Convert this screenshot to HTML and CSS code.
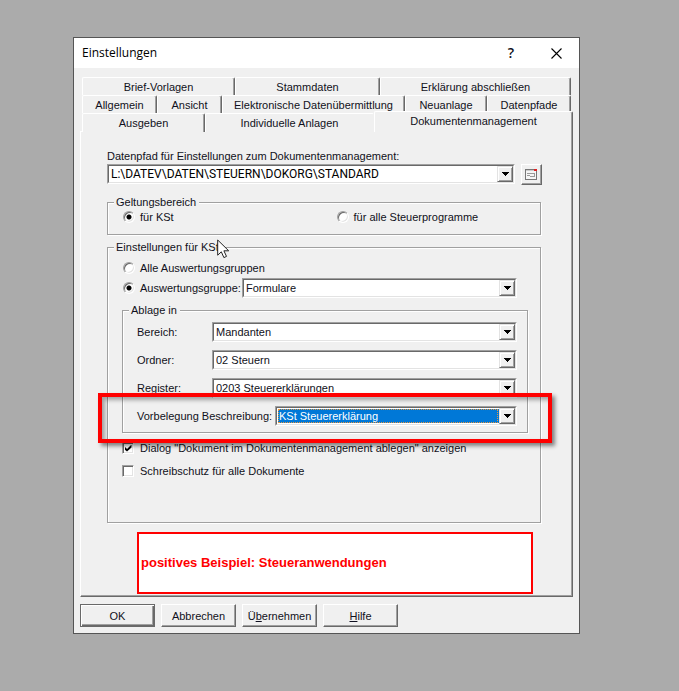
FILE: index.html
```html
<!DOCTYPE html>
<html lang="de">
<head>
<meta charset="utf-8">
<title>Einstellungen</title>
<link rel="stylesheet" href="styles.css">
</head>
<body>
<main class="dialog">
  <header class="titlebar">
    <h1 class="title">Einstellungen</h1>
    <button class="title-btn help" type="button">?</button>
    <button class="title-btn" type="button" aria-label="Schließen">
      <svg width="11" height="11" viewBox="0 0 11 11"><path d="M0.5 0.5l10 10M10.5 0.5l-10 10" stroke="#000" stroke-width="1.1" fill="none"/></svg>
    </button>
  </header>
  <form class="body">
    <nav class="tabs">
      <div class="tab-row row-a">
        <button type="button" class="tab">Brief-Vorlagen</button>
        <button type="button" class="tab">Stammdaten</button>
        <button type="button" class="tab">Erklärung abschließen</button>
      </div>
      <div class="tab-row row-b">
        <button type="button" class="tab">Allgemein</button>
        <button type="button" class="tab">Ansicht</button>
        <button type="button" class="tab">Elektronische Datenübermittlung</button>
        <button type="button" class="tab">Neuanlage</button>
        <button type="button" class="tab">Datenpfade</button>
      </div>
      <div class="tab-row row-c">
        <button type="button" class="tab">Ausgeben</button>
        <button type="button" class="tab last">Individuelle Anlagen</button>
        <button type="button" class="tab active">Dokumentenmanagement</button>
      </div>
    </nav>
    <section class="panel">
      <label class="path-label" for="path">Datenpfad für Einstellungen zum Dokumentenmanagement:</label>
      <div class="path-row">
        <span class="combo path">
          <select id="path"><option>L:\DATEV\DATEN\STEUERN\DOKORG\STANDARD</option></select>
          <span class="arrow"><svg width="7" height="4" viewBox="0 0 7 4" shape-rendering="crispEdges"><path d="M0 0h7v1h-1v1h-1v1h-1v1h-1v-1h-1v-1h-1v-1h-1z"/></svg></span>
        </span>
        <button class="browse" type="button" aria-label="Pfad wählen">
          <svg width="13" height="11" viewBox="0 0 13 11" shape-rendering="crispEdges">
            <path d="M0 0h12v11h-12z" fill="#777"/><path d="M1 2h10v8h-10z" fill="#f5f5f5"/><path d="M1 1h8v1h-8z" fill="#ccc"/>
            <path d="M2 4h8v1h-8zM2 6h3v1h-3zM9 5h1v3h-1zM5 7h5v1h-5z" fill="#999"/><path d="M9 0h3v2h-3z" fill="#d22"/>
          </svg>
        </button>
      </div>

      <fieldset class="group scope">
        <legend>Geltungsbereich</legend>
        <label class="choice"><input type="radio" name="scope" checked>für KSt</label>
        <label class="choice"><input type="radio" name="scope">für alle Steuerprogramme</label>
      </fieldset>

      <fieldset class="group settings">
        <legend>Einstellungen für KSt
          <svg class="cursor" width="13" height="20" viewBox="0 0 13 20"><path d="M0.7 1v15.2l3.6-3.4 2.6 5.8 2.6-1.2-2.6-5.6h4.8z" fill="#fff" stroke="#222" stroke-width="1"/></svg>
        </legend>
        <label class="choice"><input type="radio" name="group">Alle Auswertungsgruppen</label>
        <div class="line group-line">
          <label class="choice"><input type="radio" name="group" checked>Auswertungsgruppe:</label>
          <span class="combo">
            <select aria-label="Auswertungsgruppe"><option>Formulare</option></select>
            <span class="arrow"><svg width="7" height="4" viewBox="0 0 7 4" shape-rendering="crispEdges"><path d="M0 0h7v1h-1v1h-1v1h-1v1h-1v-1h-1v-1h-1v-1h-1z"/></svg></span>
          </span>
        </div>
        <fieldset class="group store">
          <legend>Ablage in</legend>
          <div class="line">
            <label for="area">Bereich:</label>
            <span class="combo">
              <select id="area"><option>Mandanten</option></select>
              <span class="arrow"><svg width="7" height="4" viewBox="0 0 7 4" shape-rendering="crispEdges"><path d="M0 0h7v1h-1v1h-1v1h-1v1h-1v-1h-1v-1h-1v-1h-1z"/></svg></span>
            </span>
          </div>
          <div class="line">
            <label for="folder">Ordner:</label>
            <span class="combo">
              <select id="folder"><option>02 Steuern</option></select>
              <span class="arrow"><svg width="7" height="4" viewBox="0 0 7 4" shape-rendering="crispEdges"><path d="M0 0h7v1h-1v1h-1v1h-1v1h-1v-1h-1v-1h-1v-1h-1z"/></svg></span>
            </span>
          </div>
          <div class="line">
            <label for="register">Register:</label>
            <span class="combo">
              <select id="register"><option>0203 Steuererklärungen</option></select>
              <span class="arrow"><svg width="7" height="4" viewBox="0 0 7 4" shape-rendering="crispEdges"><path d="M0 0h7v1h-1v1h-1v1h-1v1h-1v-1h-1v-1h-1v-1h-1z"/></svg></span>
            </span>
          </div>
          <div class="line wide">
            <label for="preset">Vorbelegung Beschreibung:</label>
            <span class="combo selected">
              <select id="preset"><option>KSt Steuererklärung</option></select>
              <span class="arrow"><svg width="7" height="4" viewBox="0 0 7 4" shape-rendering="crispEdges"><path d="M0 0h7v1h-1v1h-1v1h-1v1h-1v-1h-1v-1h-1v-1h-1z"/></svg></span>
            </span>
          </div>
          <div class="marker"></div>
        </fieldset>
        <label class="choice check"><input type="checkbox" checked>Dialog "Dokument im Dokumentenmanagement ablegen" anzeigen</label>
        <label class="choice check"><input type="checkbox">Schreibschutz für alle Dokumente</label>
      </fieldset>

      <p class="note">positives Beispiel: Steueranwendungen</p>
    </section>
    <footer class="actions">
      <button type="button" class="btn default">OK</button>
      <button type="button" class="btn">Abbrechen</button>
      <button type="button" class="btn"><span>Ü<u>b</u>ernehmen</span></button>
      <button type="button" class="btn"><span><u>H</u>ilfe</span></button>
    </footer>
  </form>
</main>
</body>
</html>
```
FILE: styles.css
```css
:root {
  --face: #f0f0f0;
  --shade: #a0a0a0;
  --dark: #696969;
  --light: #e3e3e3;
}

* {
  box-sizing: border-box;
}

body {
  margin: 0;
  padding: 37px 99px 57px 73px;
  background: #ababab;
}

body,
button,
select {
  font-family: "Liberation Sans", Arial, sans-serif;
  font-size: 11px;
  line-height: 14px;
  color: #101020;
}

button {
  padding: 0;
  border: 0;
  background: var(--face);
}

.dialog {
  border: 1px solid #555;
  background: var(--face);
}

.titlebar {
  display: flex;
  align-items: center;
  height: 30px;
  padding: 0 8px;
  background: #fff;
}

.title {
  flex: 1;
  margin: 0;
  font: 12px/16px "Open Sans", "Noto Sans", sans-serif;
  color: #000;
}

.title-btn {
  display: grid;
  place-items: center;
  width: 30px;
  height: 28px;
  background: none;
}

.title-btn.help {
  margin-right: 15px;
  font: 600 14px/16px "Open Sans", sans-serif;
}

.body {
  padding: 9px 6px 6px;
}

/* Tabs */
.tab-row {
  display: grid;
  height: 18px;
  margin: 0 2px;
}

.row-a {
  grid-template-columns: 153fr 145fr 191fr;
}

.row-b {
  grid-template-columns: 75fr 65fr 183fr 82fr 84fr;
}

.row-c {
  grid-template-columns: 123fr 169fr 199fr;
  margin-right: 0;
}

.tab {
  border: 1px solid #fff;
  border-width: 1px 1px 0;
  border-right-color: var(--dark);
  border-radius: 2px 2px 0 0;
  box-shadow: inset -1px 0 var(--shade);
  white-space: nowrap;
}

.tab.last {
  border-right-color: var(--face);
  box-shadow: none;
}

.tab.active {
  position: relative;
  z-index: 1;
  height: 21px;
  margin-top: -2px;
  padding-bottom: 2px;
}

.panel {
  padding: 17px 31px 2px 26px;
  border: 1px solid #fff;
  border-right-color: var(--dark);
  border-bottom-color: var(--dark);
  box-shadow: inset -1px -1px var(--shade);
}

.path-label {
  display: block;
}

.path-row {
  display: flex;
  gap: 6px;
  margin: 1px -1px 0 0;
}

/* Drop-down lists */
.combo {
  position: relative;
  display: flex;
  flex: 1;
  height: 20px;
  border: 1px solid var(--shade);
  border-right-color: #fff;
  border-bottom-color: #fff;
}

.combo select {
  flex: 1;
  min-width: 0;
  padding: 0 20px 0 2px;
  border: 1px solid var(--dark);
  border-right-color: var(--light);
  border-bottom-color: var(--light);
  border-radius: 0;
  outline: 0;
  appearance: none;
  background: #fff;
}

.arrow {
  position: absolute;
  top: 1px;
  right: 1px;
  bottom: 1px;
  display: grid;
  place-items: center;
  width: 16px;
  border: 1px solid var(--light);
  border-right-color: var(--dark);
  border-bottom-color: var(--dark);
  background: var(--face);
  box-shadow: inset 1px 1px #fff, inset -1px -1px var(--shade);
  pointer-events: none;
}

.combo.selected {
  background: #fff;
}

.combo.selected::before {
  content: "";
  position: absolute;
  inset: 2px 18px 2px 2px;
  border: 1px dotted #e8963c;
  pointer-events: none;
}

.combo.selected select {
  background: #0078d7 padding-box;
  box-shadow: inset 0 0 0 1px #fff;
  color: #fff;
}

.path select {
  font-family: Roboto, sans-serif;
  font-size: 12px;
  color: #000;
}

.browse {
  display: grid;
  place-items: center;
  width: 21px;
  height: 21px;
  border: 1px solid #fff;
  border-right-color: var(--dark);
  border-bottom-color: var(--dark);
  box-shadow: inset -1px -1px var(--shade);
}

/* Groups */
.group {
  min-width: 0;
  margin: 0;
  border: 1px solid var(--shade);
  box-shadow: 1px 1px #fff, inset 1px 1px #fff;
}

.group legend {
  position: relative;
  margin-left: -8px;
  padding: 0 3px 0 2px;
  background: var(--face);
}

.scope {
  display: grid;
  grid-template-columns: 213fr 204fr;
  margin-top: 10px;
  padding: 0 0 9px 14px;
}

.settings {
  margin-top: 5px;
  padding: 6px 12px 43px 14px;
}

.cursor {
  position: absolute;
  top: -1px;
  right: -8px;
}

.choice {
  display: flex;
  align-items: center;
  height: 16px;
  white-space: nowrap;
}

.choice input {
  flex: none;
  width: 12px;
  height: 12px;
  margin: 0 5px 0 1px;
  border: 1px solid var(--shade);
  border-right-color: #fff;
  border-bottom-color: #fff;
  appearance: none;
  background: #fff;
  box-shadow: inset 1px 1px var(--dark), inset -1px -1px var(--light);
}

.choice input[type="radio"] {
  border-radius: 50%;
}

.choice input[type="radio"]:checked {
  background: radial-gradient(circle, #000 2px, #fff 3px);
}

.line {
  display: grid;
  grid-template-columns: 75px 1fr;
  align-items: center;
  white-space: nowrap;
}

.line.wide {
  grid-template-columns: 138px 1fr;
}

.group-line {
  grid-template-columns: 120px 1fr;
  margin: 2px 11px 0 0;
}

.store {
  position: relative;
  display: grid;
  gap: 8px;
  margin-top: 5px;
  padding: 5px 10px 6px 14px;
}

.marker {
  position: absolute;
  right: -25px;
  bottom: -11px;
  left: -25px;
  height: 50px;
  border: 4px solid #f00;
  box-shadow: 3px 3px 4px #0007, inset 3px 3px 4px #0005;
  pointer-events: none;
}

.choice.check {
  margin-top: 7px;
}

.choice.check input {
  display: grid;
  place-items: center;
  margin: 0 6px 0 0;
}

.check input:checked::before {
  content: "";
  width: 7px;
  height: 7px;
  background: #000;
  clip-path: polygon(0 29%, 36% 64%, 100% 0, 100% 43%, 36% 100%, 0 71%);
}

.note {
  display: flex;
  align-items: center;
  height: 62px;
  margin: 9px 8px 0 30px;
  padding: 0 2px;
  border: 2px solid #f00;
  background: #fff;
  font: bold 13px/16px "Liberation Sans", sans-serif;
  color: #f00;
}

/* Bottom buttons */
.actions {
  display: flex;
  gap: 6px;
  margin-top: 7px;
}

.btn {
  width: 75px;
  height: 23px;
  border: 1px solid #fff;
  border-right-color: var(--dark);
  border-bottom-color: var(--dark);
  box-shadow: inset -1px -1px var(--shade);
}

.btn.default {
  border-color: var(--dark);
  box-shadow: inset 1px 1px #fff, inset -1px -1px var(--dark), inset -2px -2px var(--shade);
}
```
